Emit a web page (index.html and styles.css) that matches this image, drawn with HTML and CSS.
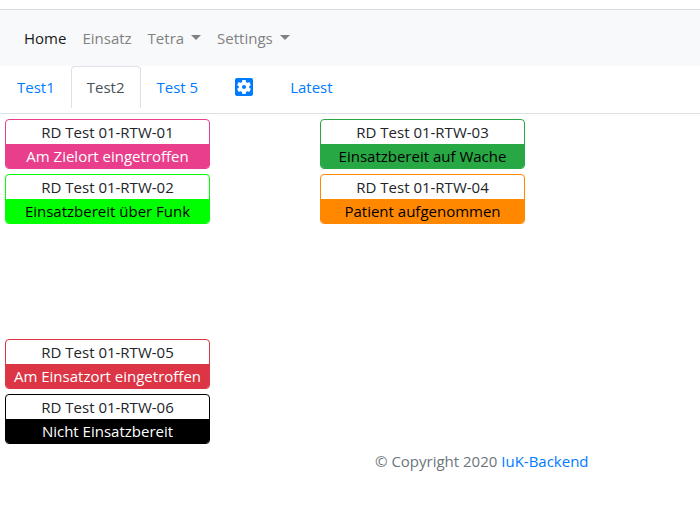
FILE: index.html
```
<!DOCTYPE html>
<html lang="de">
<head>
<meta charset="utf-8">
<meta name="viewport" content="width=device-width, initial-scale=1">
<title>IuK-Backend</title>
<link rel="stylesheet" href="styles.css">
</head>
<body>
<header class="topbar">
  <nav class="navbar">
    <a class="nav-link active" href="#">Home</a>
    <a class="nav-link" href="#">Einsatz</a>
    <button class="nav-link dropdown" type="button">Tetra</button>
    <button class="nav-link dropdown" type="button">Settings</button>
  </nav>
</header>
<main>
  <nav class="tabs">
    <a class="tab" href="#">Test1</a>
    <a class="tab active" href="#">Test2</a>
    <a class="tab" href="#">Test 5</a>
    <a class="tab tab-settings" href="#" aria-label="Einstellungen"><svg class="tab-icon" viewBox="0 0 24 24" aria-hidden="true"><path fill="currentColor" d="M12 10c-1.100 0-2 .9-2 2s.9 2 2 2 2-.9 2-2-.9-2-2-2zm7-7H5c-1.110 0-2 .9-2 2v14c0 1.100.89 2 2 2h14c1.110 0 2-.9 2-2V5c0-1.100-.89-2-2-2zm-1.750 9c0 .23-.02.46-.05.68l1.480 1.160c.13.11.17.3.08.45l-1.400 2.420c-.09.15-.27.21-.43.15l-1.740-.7c-.36.28-.76.51-1.180.69l-.26 1.850c-.03.17-.18.3-.35.3h-2.800c-.17 0-.32-.13-.35-.29l-.26-1.850c-.43-.18-.82-.41-1.180-.69l-1.740.7c-.16.06-.34 0-.43-.15l-1.400-2.420c-.09-.15-.05-.34.08-.45l1.480-1.160c-.03-.23-.05-.46-.05-.69 0-.23.02-.46.05-.68l-1.480-1.160c-.13-.11-.17-.3-.08-.45l1.400-2.420c.09-.15.27-.21.43-.15l1.740.7c.36-.28.76-.51 1.180-.69l.26-1.850c.03-.17.18-.3.35-.3h2.800c.17 0 .32.13.35.29l.26 1.850c.43.18.82.41 1.180.69l1.740-.7c.16-.06.34 0 .43.15l1.400 2.420c.09.15.05.34-.08.45l-1.480 1.160c.03.23.05.46.05.69z"/></svg></a>
    <a class="tab" href="#">Latest</a>
  </nav>
  <section class="board">
    <article class="unit left row-1 pink"><div>RD Test 01-RTW-01</div><div class="status">Am Zielort eingetroffen</div></article>
    <article class="unit left row-2 lime"><div>RD Test 01-RTW-02</div><div class="status">Einsatzbereit über Funk</div></article>
    <article class="unit right row-1 green"><div>RD Test 01-RTW-03</div><div class="status">Einsatzbereit auf Wache</div></article>
    <article class="unit right row-2 orange"><div>RD Test 01-RTW-04</div><div class="status">Patient aufgenommen</div></article>
    <article class="unit left row-5 red"><div>RD Test 01-RTW-05</div><div class="status">Am Einsatzort eingetroffen</div></article>
    <article class="unit left row-6 black"><div>RD Test 01-RTW-06</div><div class="status">Nicht Einsatzbereit</div></article>
  </section>
</main>
<footer class="footer">© Copyright 2020 <a href="#">IuK-Backend</a></footer>
</body>
</html>
```
FILE: styles.css
```
* { box-sizing: border-box; }

body {
  margin: 0;
  background: #fff;
  color: #212529;
  font: 15px/24px "Open Sans", "Noto Sans", sans-serif;
}

a { color: #007bff; text-decoration: none; }

.topbar { padding-top: 9px; }

.navbar {
  display: flex;
  padding: 8px 16px;
  border-top: 1px solid #dcdcdc;
  background: #f8f9fa;
}

.nav-link {
  padding: 8px;
  border: 0;
  background: none;
  color: #808182;
  font: inherit;
}

.nav-link.active { color: #191919; }

.dropdown::after {
  content: "";
  display: inline-block;
  margin-left: 7px;
  vertical-align: 4px;
  border: 5px solid transparent;
  border-top-color: currentColor;
  border-bottom: 0;
}

.tabs {
  display: flex;
  padding: 0 1px 5px;
  border-bottom: 1px solid #dee2e6;
}

.tab {
  height: 42px;
  padding: 8px 15px;
  border: 1px solid transparent;
  border-bottom: 0;
  border-radius: 4px 4px 0 0;
}

.tab.active {
  border-color: #dee2e6;
  background: #fff;
  color: #495057;
}

.tab-settings { padding: 8px 17px; }

.tab-icon { display: block; width: 24px; height: 24px; }

.board {
  display: grid;
  grid-template-columns: repeat(auto-fill, 100px);
  grid-template-rows: repeat(6, 50px);
  gap: 5px;
  padding: 5px;
}

.unit {
  border: 1px solid var(--status);
  border-radius: 4px;
  background: #fff;
  text-align: center;
  white-space: nowrap;
  overflow: hidden;
}

.status { background: var(--status); color: var(--label); }

.left { grid-column: 1 / span 2; }
.right { grid-column: 4 / span 2; }
.row-1 { grid-row: 1; }
.row-2 { grid-row: 2; }
.row-5 { grid-row: 5; }
.row-6 { grid-row: 6; }

.pink { --status: #e83e8c; --label: #fff; }
.lime { --status: #00ff00; --label: #000; }
.green { --status: #28a745; --label: #000; }
.orange { --status: #ff8800; --label: #000; }
.red { --status: #dc3545; --label: #fff; }
.black { --status: #000; --label: #fff; }

.footer { margin-left: 375px; color: #6c757d; }
```
